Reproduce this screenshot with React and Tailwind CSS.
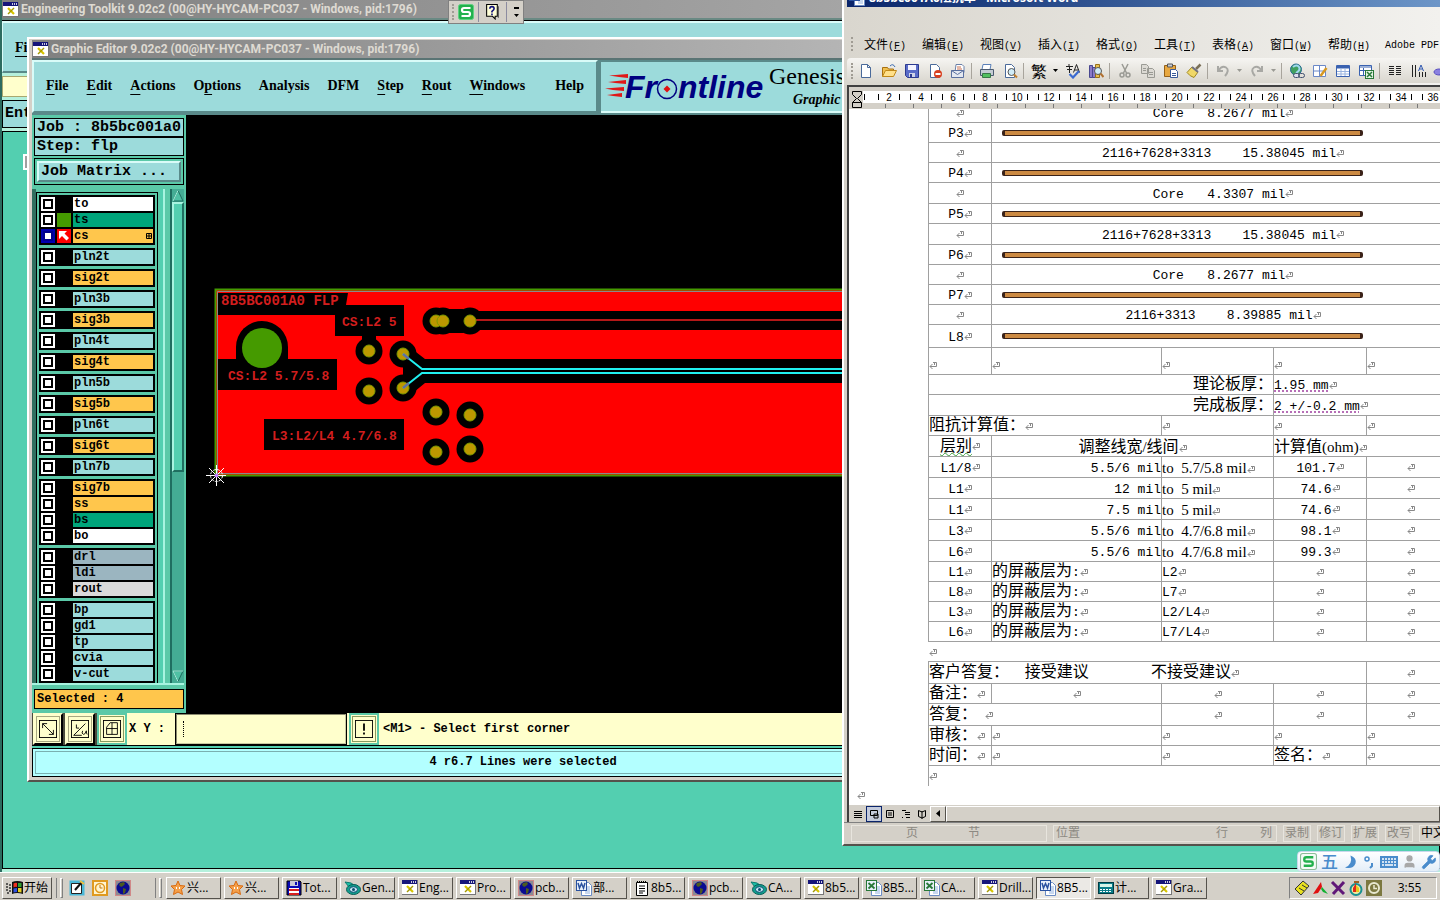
import React from 'react';
import clsx from 'clsx';
import { User, Wrench } from 'lucide-react';

const MONO = "font-['Liberation_Mono','Noto_Sans_CJK_SC',monospace]";
const SERIF = "font-['Liberation_Serif','Noto_Sans_CJK_SC',serif]";
const TITLE = "font-['Open_Sans','Noto_Sans_CJK_SC',sans-serif]";
const CAPTION = "font-['Roboto','Noto_Sans_CJK_SC',sans-serif]";

const RAISED = 'border border-t-white border-l-white border-r-[#55524c] border-b-[#55524c]';
const TEAL_RAISED = 'border-2 border-t-[#d9fbf8] border-l-[#d9fbf8] border-r-[#5a8a8a] border-b-[#5a8a8a] bg-[#9cdbdb]';

/* ---------- shared small icons ---------- */

const XIcon = () => (
    <svg width="16" height="15" viewBox="0 0 16 15" className="shrink-0">
        <rect width="16" height="15" fill="#777" />
        <rect width="15" height="14" fill="#fff" />
        <rect width="15" height="4" fill="#15157a" />
        <path d="M9 1h1v2H9zM11 1h1v2h-1zM13 1h1v2h-1z" fill="#ccd" />
        <path d="M5 6l6 6" stroke="#d6c400" strokeWidth="2.2" />
        <path d="M11 6l-6 6" stroke="#a39800" strokeWidth="1.4" />
    </svg>
);

const GlobeIcon = () => (
    <svg width="16" height="16" viewBox="0 0 16 16" className="shrink-0">
        <rect x="0.5" y="0.5" width="15" height="15" fill="#8b8a94" stroke="#d08888" />
        <circle cx="8" cy="8" r="6.5" fill="#0b0b90" />
        <path d="M5 3l4-1 1 2-2 2-2 1-2-2zM8 8l3 1-1 4-2 1z" fill="#4c5a20" />
    </svg>
);

const StarIcon = () => (
    <svg width="16" height="16" viewBox="0 0 16 16" className="shrink-0">
        <path d="M8 1l2 4.500 5 .5-3.500 3.500 1 5L8 12l-4.500 2.500 1-5L1 6l5-.5z" fill="#f5a04a" stroke="#d86a10" />
        <path d="M6 7h1v2H6zM9 7h1v2H9z" fill="#fff" />
    </svg>
);

const FloppyIcon = () => (
    <svg width="16" height="16" viewBox="0 0 16 16" className="shrink-0">
        <path d="M1 1h13l1 1v13H1z" fill="#0909b4" stroke="#000" />
        <path d="M4 1h8v5H4z" fill="#c8c8d8" />
        <path d="M9 2h2v3H9z" fill="#0909b4" />
        <path d="M3 8h10v7H3z" fill="#fff" />
        <path d="M3 9h10v2H3zM3 13h10v2H3z" fill="#d82020" />
    </svg>
);

const GenesisIcon = () => (
    <svg width="17" height="16" viewBox="0 0 17 16" className="shrink-0">
        <path d="M1 2l6 1 3 2-5 2z" fill="#1cc0a8" stroke="#0a7c70" />
        <ellipse cx="9.500" cy="9.500" rx="7" ry="5" fill="#12a08e" stroke="#0a5c58" />
        <ellipse cx="9.500" cy="9.500" rx="4" ry="2.800" fill="#bfe9f2" stroke="#104a70" />
        <circle cx="9.500" cy="9.500" r="1.500" fill="#104a70" />
    </svg>
);

const OfficeIcon = ({ tone, letter }) => (
    <svg width="16" height="16" viewBox="0 0 16 16" className="shrink-0">
        <path d="M5.500 2.500h7l3 3v10h-10z" fill="#fff" stroke="#6b8cc4" />
        <path d="M9 7h5M9 9h5M9 11h5M9 13h5" stroke="#8fb0e0" />
        <rect x="0.500" y="0.500" width="10" height="10" fill="#e8f0fa" stroke={tone} />
        {letter === 'W'
            ? <path d="M2 3l1.500 5L5.500 3.500 7.500 8 9 3" fill="none" stroke={tone} strokeWidth="1.500" />
            : <path d="M2.500 3l6 5.500M8.500 3l-6 5.500" stroke={tone} strokeWidth="1.800" />}
    </svg>
);

const NoteIcon = () => (
    <svg width="16" height="16" viewBox="0 0 16 16" className="shrink-0">
        <path d="M2.500 2.500h11v13h-11z" fill="#fff" stroke="#000" />
        <path d="M3 1.500h10" stroke="#000" strokeDasharray="1 1" />
        <path d="M5 6h6M5 8.500h6M5 11h6M5 13h4" stroke="#000" />
    </svg>
);

const CalcIcon = () => (
    <svg width="16" height="16" viewBox="0 0 16 16" className="shrink-0">
        <rect x="0.500" y="2.500" width="15" height="11" fill="#0a7c88" stroke="#003c44" />
        <path d="M2 4h12v3H2z" fill="#d8f4e8" />
        <path d="M2 9.500h12M2 11.500h12" stroke="#fff" strokeDasharray="2 1" />
    </svg>
);

const SogouIcon = ({ size, outlined }) => (
    <svg width={size} height={size} viewBox="0 0 16 16" className="shrink-0">
        <rect x="0.500" y="0.500" width="15" height="15" rx="2" fill={outlined ? '#f4fbf6' : '#23b14d'} stroke={outlined ? '#8cbc98' : '#5fd080'} />
        <path d="M12.500 4H6Q4 4 4 6t2 2h4q2 0 2 2t-2 2H3.500" fill="none" stroke={outlined ? '#23b14d' : '#fff'} strokeWidth="2.200" />
    </svg>
);

/* ---------- Engineering Toolkit (back window) ---------- */

const TitleBar = ({ children }) => (
    <div className={clsx('flex h-[18px] items-center gap-0.5 bg-linear-to-r from-[#808080] to-[#c0c0c0] pl-px text-[12px] font-bold whitespace-nowrap text-[#dedad2]', CAPTION)}>
        <XIcon />
        <span>{children}</span>
    </div>
);

const ToolkitWindow = () => (
    <section className="absolute inset-0 flex flex-col border-l-2 border-[#2d6b5f] bg-[#b5f0dc] pb-[3px]">
        <TitleBar>Engineering Toolkit 9.02c2 (00@HY-HYCAM-PC037 - Windows, pid:1796)</TitleBar>
        <div className="h-[3px] border-b border-black bg-[#6a8a84]" />
        <div className={clsx('flex h-[52px] items-center border-l border-black pl-3 text-[14px] font-bold', TEAL_RAISED, SERIF)}>
            <button type="button" className="underline underline-offset-4">File</button>
        </div>
        <div className="mt-[3px] h-[21px] border border-[#a8a870] bg-[#ffffcc]" />
        <div className={clsx('mt-[3px] h-[28px] border border-black bg-[#9cdbdb] pl-0.5 text-[15px] leading-[26px] font-bold', MONO)}>Entity</div>
        <div className="mt-[3px] flex-1 border border-black bg-[#53cfb0] pt-[22px] pl-[20px]">
            <div className="h-4 w-4 border-2 border-white bg-[#a0a0a0]" />
        </div>
    </section>
);

/* ---------- Graphic Editor ---------- */

const MENUS = [
    ['', 'F', 'ile'], ['', 'E', 'dit'], ['', 'A', 'ctions'], ['O', 'p', 'tions'],
    ['Analysis', '', ''], ['DFM', '', ''], ['', 'S', 'tep'], ['', 'R', 'out'], ['', 'W', 'indows'],
];

const WHITE = 'bg-white';
const GREEN = 'bg-[#00a57b]';
const ORANGE = 'bg-[#ffc64c]';
const CYAN = 'bg-[#9cdbdb]';
const SLATE = 'bg-[#9bb5c0]';

const LAYER_GROUPS = [
    [['to', WHITE], ['ts', GREEN, 'bg-[#459a00]'], ['cs', ORANGE, 'bg-[#ff0000]']],
    [['pln2t', CYAN]], [['sig2t', ORANGE]],
    [['pln3b', CYAN]], [['sig3b', ORANGE]],
    [['pln4t', CYAN]], [['sig4t', ORANGE]],
    [['pln5b', CYAN]], [['sig5b', ORANGE]],
    [['pln6t', CYAN]], [['sig6t', ORANGE]],
    [['pln7b', CYAN]],
    [['sig7b', ORANGE], ['ss', ORANGE], ['bs', GREEN], ['bo', WHITE]],
    [['drl', SLATE], ['ldi', SLATE], ['rout', 'bg-[#dadada]']],
    [['bp', CYAN], ['gd1', CYAN], ['tp', CYAN], ['cvia', CYAN], ['v-cut', CYAN], ['', CYAN]],
];

const LayerRow = ({ name, tone, swatch }) => {
    const active = name === 'cs';
    return (
        <label className="flex h-4 items-center gap-0.5 px-0.5">
            <span className={clsx('grid h-3.5 w-3.5 shrink-0 place-items-center', active ? 'bg-[#0000b0]' : 'bg-white')}>
                <input
                    type="checkbox"
                    defaultChecked={active}
                    aria-label={name || 'next layer'}
                    className={clsx('h-2.5 w-2.5 appearance-none border-2 bg-white', active ? 'border-[#00008c]' : 'border-black')}
                />
            </span>
            <span className={clsx('h-3.5 w-3.5 shrink-0', swatch)}>
                {active && (
                    <svg width="14" height="14" viewBox="0 0 14 14">
                        <path d="M2 2h8L7.500 4.500 12 9l-2.500 2.500L5 7 2 10z" fill="#fff" />
                    </svg>
                )}
            </span>
            <span className={clsx('flex h-3.5 flex-1 items-center justify-between px-px text-[12px] leading-[14px] font-bold', tone)}>
                {name}
                {active && (
                    <svg width="6" height="6" viewBox="0 0 6 6"><path d="M.5.5h5v5h-5zM3 .5v5M.5 3h5" fill="none" stroke="#000" /></svg>
                )}
            </span>
        </label>
    );
};

const ScrollTrough = () => (
    <div className="flex w-[14px] flex-col border-l-2 border-[#1f6e60] bg-[#44ac94]">
        <svg width="12" height="13" viewBox="0 0 12 13"><path d="M6 1.500L1 12h10z" fill="#4fc0a4" stroke="#1f6e60" /><path d="M6 1.500L1 12" stroke="#a8f4e0" /></svg>
        <div className="h-[270px] border-2 border-t-[#a8f4e0] border-r-[#1f6e60] border-b-[#1f6e60] border-l-[#a8f4e0] bg-[#53cfb0]" />
        <div className="flex-1" />
        <svg width="12" height="13" viewBox="0 0 12 13"><path d="M6 11.500L1 1h10z" fill="#4fc0a4" stroke="#1f6e60" /><path d="M1 1h10M1 1l5 10.500" stroke="#a8f4e0" /></svg>
    </div>
);

const Sidebar = () => (
    <aside className={clsx('flex w-[154px] shrink-0 flex-col bg-[#5bc9a8] px-0.5 pt-[3px] pb-1', MONO)}>
        <div className="h-[19px] border border-black bg-[#9cdbdb] pl-0.5 text-[15px] leading-[18px] font-bold whitespace-pre">Job : 8b5bc001a0</div>
        <div className="h-[19px] border border-black bg-[#9cdbdb] pl-0.5 text-[15px] leading-[18px] font-bold whitespace-pre">Step: flp</div>
        <div className="mt-0.5 h-[27px] border border-black p-0.5">
            <button type="button" className={clsx('block h-full w-full pl-0.5 text-left text-[15px] leading-[17px] font-bold', TEAL_RAISED)}>Job Matrix ...</button>
        </div>
        <div className="mt-1 -ml-0.5 flex min-h-0 flex-1 overflow-hidden border-b-2 border-[#a8f4e0]">
            <div className="w-1 bg-[#2f7060]" />
            <div className="mt-[3px] flex w-[122px] flex-col gap-[3px] border border-b-0 border-black p-0.5 pb-0">
                {LAYER_GROUPS.map((group) => (
                    <div key={group[0][0]} className="shrink-0 bg-black py-px">
                        {group.map(([name, tone, swatch]) => <LayerRow key={name} name={name} tone={tone} swatch={swatch} />)}
                    </div>
                ))}
            </div>
            <div className="ml-0.5 w-[3px] bg-[#53cfb0]" />
            <div className="w-0.5 bg-[#a8f4e0]" />
            <div className="flex-1" />
            <ScrollTrough />
        </div>
        <div className="mt-1 h-[20px] border border-black bg-[#ffc64c] pl-0.5 text-[12px] leading-[18px] font-bold whitespace-pre">Selected : 4</div>
    </aside>
);

const FrontlineLogo = () => (
    <svg width="164" height="34" viewBox="0 0 164 34" className="shrink-0">
        <path d="M4 5.500L23 4v4L14 7zM3 12l18-2v4L10 13zM0 18.500L19 17v4L8 20zM2 25l15-2v4L8 26z" fill="#e01818" />
        <g fontFamily="Liberation Sans" fontWeight="700" fontStyle="italic" fontSize="32" fill="#000080">
            <text x="20" y="28">Fr</text>
            <text x="73" y="28">ntline</text>
        </g>
        <circle cx="62" cy="19" r="9.500" fill="none" stroke="#000080" strokeWidth="1.500" />
        <path d="M62 15.500l3.500 3.500-3.500 3.500-3.500-3.500z" fill="#e01010" />
    </svg>
);

const MenuBar = () => (
    <header className={clsx('flex h-[55px] bg-[#5a8a8a] pb-0.5', SERIF)}>
        <nav className={clsx('flex w-[566px] shrink-0 items-center gap-[18px] px-3 pb-0.5 text-[14px] font-bold', TEAL_RAISED)}>
            {MENUS.map(([a, u, b]) => (
                <button key={a + u + b} type="button">{a}<span className="underline underline-offset-4">{u}</span>{b}</button>
            ))}
            <button type="button" className="ml-auto">Help</button>
        </nav>
        <div className="ml-[3px] flex flex-1 items-center border-t-2 border-b-2 border-t-[#5a8a8a] border-b-[#d9fbf8] bg-[#9cdbdb] pl-1">
            <FrontlineLogo />
            <div className="flex flex-col">
                <span className="text-[24px] leading-[26px]">Genesis 2000</span>
                <span className="pl-6 text-[14px] leading-[22px] font-bold italic">Graphic Editor</span>
            </div>
        </div>
    </header>
);

const PADS = [[436, 321], [443, 321], [470, 321], [369, 351], [403, 354], [369, 391], [403, 388], [436, 412], [470, 415], [436, 452], [470, 449]];

const BoardCanvas = () => (
    <svg width="830" height="598" viewBox="186 115 830 598" className="shrink-0">
        <rect x="215.500" y="289.500" width="900" height="186" fill="#f00" stroke="#459a00" strokeWidth="2" />
        <path d="M217.500 475V291.500H1100M217.500 473.500H1100" fill="none" stroke="#8a8a8a" />
        <path d="M218 293h130l-2 12h-11v10H218zM335 305h69v31h-69zM218 359h119v31H218zM264 419h140v31H264z" fill="#000" />
        <path d="M470 311h560v19H470zM443 309h20l7 4v17l-7 3h-20zM403 342l22 17h600v24H425l-22 18z" fill="#000" />
        <circle cx="262" cy="347" r="26" fill="#000" />
        <path d="M236 347h52v14h-52zM362 336h14v6h-14z" fill="#000" />
        {PADS.map(([x, y]) => <circle key={`h${x}-${y}`} cx={x} cy={y} r="13.500" fill="#000" />)}
        <path d="M470 320h560" stroke="#b41818" strokeWidth="2" />
        {PADS.map(([x, y]) => <circle key={`p${x}-${y}`} cx={x} cy={y} r="6" fill="#bc9800" stroke="#7c9a00" />)}
        <circle cx="262" cy="348" r="20" fill="#459a00" />
        <path d="M403 354l19 15h600M403 388l19-15h600" fill="none" stroke="#20f0f0" strokeWidth="2" />
        <path d="M403 354l6 5M403 388l6-5" stroke="#6070a0" strokeWidth="2.500" />
        <g fill="#d21e1e" fontFamily="Liberation Mono" fontWeight="700" fontSize="13">
            <text x="221" y="305" fontSize="14">8B5BC001A0 FLP</text>
            <text x="342" y="326">CS:L2 5</text>
            <text x="228" y="380">CS:L2 5.7/5.8</text>
            <text x="272" y="440">L3:L2/L4 4.7/6.8</text>
        </g>
        <g fill="none" stroke="#fff">
            <path d="M206 475.500h20M216.500 465v21M209 468l15 15M224 468l-15 15" />
            <circle cx="216.500" cy="475.500" r="6" strokeDasharray="3 1" />
        </g>
        <circle cx="216.500" cy="475.500" r="2" fill="#c080ff" />
    </svg>
);

const ToolButton = ({ label, framed, children }) => (
    <button
        type="button"
        aria-label={label}
        className={clsx('grid w-[30px] place-items-center border-2', framed ? 'border-[#5bc9a8] bg-[#ffffcc] outline outline-[#8a9a60] -outline-offset-4' : 'border-[#ffffcc] border-r-black border-b-black bg-[#ffffcc] outline outline-[#a8a880] -outline-offset-4')}
    >
        <svg width="18" height="18" viewBox="0 0 20 20" fill="none" stroke="#000">
            <rect x="0.500" y="0.500" width="19" height="19" />
            {children}
        </svg>
    </button>
);

const CommandBar = () => (
    <div className={clsx('flex h-[33px] border-b border-black bg-[#ffffcc] text-[12px] font-bold', MONO)}>
        <div className="flex gap-0.5 bg-black/70 pl-px">
            <ToolButton label="Corner to corner"><path d="M4 4l12 12M4 9V4h5M16 11v5h-5" /></ToolButton>
            <ToolButton label="Length and angle"><path d="M3 17L16 4M3 17h9M6 5v4h3M13 12q-2 3 1 4 2 0 3-4 0 3 1 4" /></ToolButton>
            <ToolButton label="Grid" framed><path d="M4 16V8l4-5h8v13zM10 3v13M4 9.500h12" /></ToolButton>
        </div>
        <label htmlFor="xy" className="w-[48px] self-center pl-0.5 whitespace-pre">X Y :</label>
        <div className="flex w-[172px] items-center border-2 border-t-[#8a8a70] border-r-[#c8c8a0] border-b-[#c8c8a0] border-l-[#8a8a70] pl-1.5 outline outline-black -outline-offset-1">
            <span className="h-4 border-l border-dotted border-black" />
            <input id="xy" type="text" className="w-full bg-transparent outline-none" />
        </div>
        <div className="ml-0.5 flex bg-[#5bc9a8]">
            <ToolButton label="Warnings" framed><path d="M10 4v8M10 14v2" strokeWidth="2" /></ToolButton>
        </div>
        <div className="ml-0.5 self-center pl-0.5 whitespace-pre">&lt;M1&gt; - Select first corner</div>
    </div>
);

const GraphicEditor = () => (
    <section className="absolute top-[37px] left-[27px] w-[992px] border-2 border-white border-r-[#55524c] border-b-[#55524c]">
        <div className="border-[3px] border-t-[1px] border-[#d4d0c8]">
            <TitleBar>Graphic Editor 9.02c2 (00@HY-HYCAM-PC037 - Windows, pid:1796)</TitleBar>
            <div className="h-0.5 bg-[#5a7474]" />
            <MenuBar />
            <div className="flex h-[598px] overflow-hidden bg-black">
                <Sidebar />
                <BoardCanvas />
            </div>
            <CommandBar />
            <div className={clsx('mt-0.5 h-[29px] border border-black bg-[#b3ffff] text-center text-[12px] leading-[26px] font-bold outline-1 -outline-offset-4 outline-[#7ab0b0]', MONO)}>
                4 r6.7 Lines were selected
            </div>
        </div>
    </section>
);

/* ---------- Word ---------- */

const WORD_MENUS = [['文件', 'F'], ['编辑', 'E'], ['视图', 'V'], ['插入', 'I'], ['格式', 'O'], ['工具', 'T'], ['表格', 'A'], ['窗口', 'W'], ['帮助', 'H']];

const PAGE = 'M3.500 1.500h6l3 3v10h-9z';

const TOOLBAR = [
    ['New', <><path d={PAGE} fill="#fff" stroke="#4a6a9a" /><path d="M9.500 1.500v3h3" fill="none" stroke="#4a6a9a" /></>],
    ['Open', <><path d="M1.500 13.500V4.500h5l1 1.500h5v2" fill="#f0c050" stroke="#a87010" /><path d="M1.500 13.500l3-6h11l-3 6z" fill="#ffe08a" stroke="#c08818" /><path d="M9 3q3-3 5 1" fill="none" stroke="#3a6ab0" /></>],
    ['Save', <><path d="M1.500 1.500h13v13h-11l-2-2z" fill="#5a6cc8" stroke="#2c3a90" /><path d="M4 2h8v5H4z" fill="#f4f4ff" /><path d="M5 10h6v4H5z" fill="#d0d4e8" /><path d="M6 11h2v3H6z" fill="#2c3a90" /></>],
    ['Permission', <><path d={PAGE} fill="#fff" stroke="#4a6a9a" /><circle cx="11" cy="11" r="4" fill="#d84020" /><path d="M8.500 11h5" stroke="#fff" strokeWidth="2" /></>],
    ['Mail', <><path d="M6 1.500h6l2 2v6H5z" fill="#fff" stroke="#6a80a8" /><path d="M7 4h4M7 6h5" stroke="#c87050" /><path d="M1.500 7.500h12v7h-12z" fill="#e4e8f0" stroke="#5a70a0" /><path d="M1.500 7.500l6 4 6-4" fill="none" stroke="#5a70a0" /></>],
    null,
    ['Print', <><path d="M4 1.500h8l-1 5H3z" fill="#fff" stroke="#5a80b8" /><path d="M1.500 6.500h13v6h-13z" fill="#c4ccd4" stroke="#4a5a70" /><path d="M3.500 10.500h8v4h-8z" fill="#52c060" stroke="#387848" /></>],
    ['Preview', <><path d={PAGE} fill="#fff" stroke="#4a6a9a" /><circle cx="9.500" cy="9" r="3.500" fill="#d0ecf8" stroke="#555" /><path d="M12 11.500l3 3" stroke="#c08030" strokeWidth="2" /></>],
    null,
    ['Convert', '繁'],
    'more',
    ['Spelling', <><path d="M1 3.500h7M4 1v2M2 6.500h5M4.500 4v6M8.500 9.500l3-8 3 8M9.500 7h4" fill="none" stroke="#222" /><path d="M4.500 11l3.500 3.500 6-6.500" fill="none" stroke="#3a6ad0" strokeWidth="2.200" /></>],
    ['Research', <><path d="M1.500 2.500h3v12h-3zM4.500 4.500h3v10h-3z" fill="#8a7ac8" stroke="#4a4890" /><path d="M7.500 1.500h4v13h-4z" fill="#e8c050" stroke="#987018" /><circle cx="10" cy="8" r="3.500" fill="#d0ecf8" stroke="#555" /><path d="M12.500 10.500l3 3.500" stroke="#b07030" strokeWidth="2" /></>],
    null,
    ['Cut', <><path d="M5 1l4.500 9M11 1L6.500 10" stroke="#9a9a94" strokeWidth="1.500" /><circle cx="5" cy="12" r="2" fill="none" stroke="#9a9a94" strokeWidth="1.500" /><circle cx="11" cy="12" r="2" fill="none" stroke="#9a9a94" strokeWidth="1.500" /></>],
    ['Copy', <><path d="M1.500 1.500h5l2 2v7h-7zM7.500 5.500h5l2 2v7h-7z" fill="#dcdad4" stroke="#9a9a94" /><path d="M9 9.500h4M9 11.500h4M3 5.500h3M3 7.500h3" stroke="#9a9a94" /></>],
    ['Paste', <><path d="M1.500 2.500h11v11h-11z" fill="#e8a840" stroke="#946018" /><path d="M4.500 1h5v3h-5z" fill="#c8ccd4" stroke="#555" /><path d="M7.500 6.500h5l2 2v6h-7z" fill="#fff" stroke="#3a5a98" /><path d="M9 10.500h4M9 12.500h4" stroke="#3a5a98" /></>],
    ['Format painter', <><path d="M14.500 1.500L10 6" stroke="#7a7058" strokeWidth="2.500" /><path d="M6 4l6 5-4 5.500q-4-1-7-5z" fill="#f0d868" stroke="#a08820" /><path d="M6 4l6 5" stroke="#707080" strokeWidth="2" /></>],
    null,
    ['Undo', <path d="M3 3v5h5M3.500 7.500Q7 2 11 4.500t-1 8.500" fill="none" stroke="#a8a8a4" strokeWidth="2" />],
    'more-dim',
    ['Redo', <path d="M13 3v5H8M12.500 7.500Q9 2 5 4.500t1 8.500" fill="none" stroke="#a8a8a4" strokeWidth="2" />],
    'more-dim',
    null,
    ['Hyperlink', <><circle cx="7" cy="6.500" r="5.500" fill="#40a060" stroke="#2a6a98" /><path d="M4 4q4-3 6 0t-3 6" fill="none" stroke="#a0d8f0" strokeWidth="2" /><rect x="4.500" y="10.500" width="6" height="4" rx="2" fill="#dde" stroke="#405070" /><rect x="9.500" y="10.500" width="6" height="4" rx="2" fill="none" stroke="#405070" /></>],
    ['Tables and borders', <><path d="M1.500 2.500h12v11h-12zM7.500 2.500v11M1.500 8h12" fill="#fff" stroke="#6a88c8" /><path d="M14.500 5l-6 8" stroke="#d89820" strokeWidth="2.500" /></>],
    ['Insert table', <><path d="M1.500 2.500h13v11h-13z" fill="#fff" stroke="#3a62b0" /><path d="M2 4h12" stroke="#3a62b0" strokeWidth="3" /><path d="M2 8.500h12M2 11h12M6 5v8M10 5v8" stroke="#9ab4e0" /></>],
    ['Insert sheet', <><path d="M1.500 2.500h12v10h-12z" fill="#fff" stroke="#3a62b0" /><path d="M2 4h11M2 7.500h11M5.500 5v8" stroke="#3a62b0" /><rect x="7.500" y="7.500" width="8" height="8" fill="#e4f4e4" stroke="#287838" /><path d="M9 9l5 5M14 9l-5 5" stroke="#287838" strokeWidth="1.500" /></>],
    null,
    ['Columns', <path d="M2 3.500h5M2 5.500h5M2 7.500h5M2 9.500h5M2 11.500h5M9 3.500h5M9 5.500h5M9 7.500h5M9 9.500h5M9 11.500h5" stroke="#222" />],
    ['Text direction', <><path d="M2.500 2v12M5.500 2v12M9.500 9v5M12.500 9v5M15.500 9v5" stroke="#222" /><path d="M8.500 8l2.500-6 2.500 6M9.500 6h3" fill="none" stroke="#3058b0" /></>],
    ['Drawing', <><ellipse cx="6" cy="9" rx="5" ry="3" fill="#8a80e0" stroke="#5a50c0" /><path d="M7 12l4-9 4 9z" fill="#6a8ae0" stroke="#3058b0" /></>],
];

const WordToolbar = () => (
    <div className="flex h-[25px] w-max items-center rounded-l-sm bg-linear-to-b from-[#f6f5f2] to-[#d9d6ce]">
        <span className="ml-1 h-4 w-[3px] border-l-2 border-dotted border-[#a09c94]" />
        {TOOLBAR.map((item, i) => {
            if (!item) return <span key={i} className="ml-0.5 h-4 w-1 border-l border-[#a8a49c]" />;
            if (typeof item === 'string') {
                return (
                    <button key={i} type="button" aria-label="More" className={clsx('grid w-[11px] place-items-center', item === 'more-dim' ? 'text-[#9a9a94]' : 'text-black')}>
                        <svg width="5" height="3" viewBox="0 0 5 3"><path d="M0 0h5L2.500 3z" fill="currentColor" /></svg>
                    </button>
                );
            }
            return (
                <button key={i} type="button" aria-label={item[0]} className="grid h-[22px] w-[23px] shrink-0 place-items-center text-[16px] leading-4">
                    {typeof item[1] === 'string' ? item[1] : <svg width="16" height="16" viewBox="0 0 16 16">{item[1]}</svg>}
                </button>
            );
        })}
    </div>
);

const Ruler = () => (
    <div className="relative h-[24px] overflow-hidden border-t-2 border-[#404040] bg-[#d4d0c8] pt-1">
        <div className="ml-[14px] flex h-[12px] bg-white text-[10px] leading-[13px]">
            <span className="my-[3px] mr-2 ml-px border-l border-black" />
            {Array.from({ length: 18 }, (_, i) => (i + 1) * 2).map((n) => (
                <span key={n} className="flex w-8 shrink-0 items-center justify-between px-[5px]">
                    <i className="h-1.5 border-l border-black" />{n}<i className="h-1.5 border-l border-black" />
                </span>
            ))}
        </div>
        <div className="ml-[36px] flex pt-px">
            {Array.from({ length: 24 }, (_, i) => <i key={i} className="h-1 w-7 shrink-0 border-l border-[#777]" />)}
        </div>
        <svg width="12" height="20" viewBox="0 0 12 20" className="absolute top-0.5 left-0.5">
            <path d="M1.500 2.500h9v3l-4 4 4 4v5h-9v-5l4-4-4-4zM1.500 13.500h9" fill="#d4d0c8" stroke="#000" />
        </svg>
    </div>
);

const Mark = () => (
    <svg width="8" height="8" viewBox="0 0 8 8" className="inline-block shrink-0">
        <path d="M4 1.500h3.500v4H1M3.500 3L1 5.500 3.500 8M5.500 1.500v2.500" fill="none" stroke="#888" />
    </svg>
);

const Copper = () => <div className="ml-[10px] h-1.5 w-[361px] rounded-xs border border-x-[3px] border-[#3a2218] bg-[#cc8a42]" />;

const c = (text, opts = {}) => ({ text, ...opts });
const L = 'text-left';
const R = 'text-right';
const SHORT = 'h-5';
const TALL = 'h-[21px]';

const stack = (name, text, h1, h2) => [
    { h: h1, cells: [c(''), c(text, { span: 4 })] },
    { h: h2, cells: [c(name), c('', { span: 4, copper: true })] },
];
const calc = (layer, from, to, ohm) => ({
    h: TALL,
    cells: [c(layer), c(from, { align: R, bare: true }), c(to, { align: L, serif: true }), c(ohm), c('')],
});
const shield = (layer, ref) => ({ h: SHORT, cells: [c(layer), c('的屏蔽层为:', { align: L }), c(ref, { align: L }), c(''), c('')] });

const ROWS = [
    ...stack('P3', 'Core   8.2677 mil', SHORT, SHORT),
    ...stack('P4', '2116+7628+3313    15.38045 mil', SHORT, SHORT),
    ...stack('P5', 'Core   4.3307 mil', TALL, SHORT),
    ...stack('P6', '2116+7628+3313    15.38045 mil', TALL, SHORT),
    ...stack('P7', 'Core   8.2677 mil', SHORT, SHORT),
    ...stack('L8', '2116+3313    8.39885 mil', SHORT, 'h-[23px]'),
    { h: 'h-[27px]', low: true, cells: [c('', { align: L }), c('', { align: L }), c('', { align: L }), c('', { align: L }), c('', { align: L })] },
    { h: SHORT, cells: [c('理论板厚：', { span: 3, align: R, bare: true }), c('1.95 mm', { span: 2, align: L, smart: true })] },
    { h: TALL, cells: [c('完成板厚：', { span: 3, align: R, bare: true }), c('2 +/-0.2 mm', { span: 2, align: L, smart: true })] },
    { h: SHORT, cells: [c('阻抗计算值：', { span: 2, align: L }), c('', { align: L }), c('', { align: L }), c('', { align: L })] },
    { h: TALL, cells: [c('层别', { wavy: true }), c('调整线宽/线间', { span: 2, serif: true }), c('计算值(ohm)', { span: 2, align: L, serif: true })] },
    calc('L1/8', '5.5/6 mil', 'to  5.7/5.8 mil', '101.7'),
    calc('L1', '12 mil', 'to  5 mil', '74.6'),
    calc('L1', '7.5 mil', 'to  5 mil', '74.6'),
    calc('L3', '5.5/6 mil', 'to  4.7/6.8 mil', '98.1'),
    calc('L6', '5.5/6 mil', 'to  4.7/6.8 mil', '99.3'),
    shield('L1', 'L2'),
    shield('L8', 'L7'),
    shield('L3', 'L2/L4'),
    shield('L6', 'L7/L4'),
    { h: SHORT, open: true, cells: [c('', { span: 5, align: L })] },
    { h: 'h-[22px]', cells: [c('客户答复：  接受建议        不接受建议', { span: 4, align: L }), c('')] },
    { h: SHORT, cells: [c('备注：', { align: L }), c(''), c(''), c(''), c('')] },
    { h: 'h-[22px]', cells: [c('答复： ', { span: 2, align: L }), c(''), c(''), c('')] },
    { h: SHORT, cells: [c('审核：', { align: L }), c('', { align: L }), c('', { align: L }), c('', { align: L }), c('', { align: L })] },
    { h: SHORT, cells: [c('时间：', { align: L }), c('', { align: L }), c('', { align: L }), c('签名：', { align: L }), c('', { align: L })] },
    { h: SHORT, last: true, cells: [c('', { span: 5, align: L })] },
];

// SimSun-like mix: half-width glyphs at 13px, ideographs at 16px
const CellText = ({ text, serif }) => text.split(/([\u4e00-\u9fff\uff1a]+)/).map((part, i) => (
    i % 2 ? <span key={i} className="text-[16px]">{part}</span> : <span key={i} className={serif ? 'text-[15px]' : 'text-[13px]'}>{part}</span>
));

const Cell = ({ cell, row }) => (
    <td
        colSpan={cell.span || 1}
        className={clsx(
            'border-[#a0a0a0] px-0 pb-0 leading-4 whitespace-pre',
            cell.copper ? 'pt-0' : 'pt-0.5',
            row.open ? 'border-y' : row.last ? 'border-t border-l' : 'border',
            row.low ? 'align-bottom' : 'align-middle',
            cell.align || 'text-center',
            cell.serif ? SERIF : MONO,
        )}
    >
        {cell.copper ? <Copper /> : (
            <>
                <span
                    className={clsx(
                        cell.smart && 'underline decoration-[#a040a0] decoration-dotted underline-offset-2',
                        cell.wavy && 'underline decoration-[#40a040] decoration-wavy decoration-1',
                    )}
                >
                    <CellText text={cell.text} serif={cell.serif} />
                </span>
                {!cell.bare && <Mark />}
            </>
        )}
    </td>
);

const Document = () => (
    <div className="h-[696px] overflow-hidden bg-white">
        <table className="-mt-[7px] ml-[79px] w-[526px] table-fixed border-collapse">
            <colgroup>
                <col className="w-[63px]" />
                <col className="w-[170px]" />
                <col className="w-[112px]" />
                <col className="w-[93px]" />
                <col className="w-[88px]" />
            </colgroup>
            <tbody>
                {ROWS.map((row, i) => (
                    <tr key={i} className={row.h}>
                        {row.cells.map((cell, j) => <Cell key={j} cell={cell} row={row} />)}
                    </tr>
                ))}
            </tbody>
        </table>
        <div className="pl-2 leading-4"><Mark /></div>
    </div>
);

const VIEWS = [
    ['Normal', 'M1 2.500h8M1 4.500h8M1 6.500h8M1 8.500h8'],
    ['Web', 'M1.500 1.500h7v5h-7zM5 5h4v4H5z'],
    ['Print layout', 'M1.500 1.500h7v7h-7zM3 4h4M3 6h4'],
    ['Outline', 'M1 1.500h4M4 3.500h5M4 5.500h5M1 8.500h1M5 8.500h4'],
    ['Reading', 'M5 2v8M1.500 1.500L5 3l3.500-1.500v6L5 9 1.500 7.500z'],
];

const FIELD = 'h-[17px] border border-[#e8e5de]';

const WordWindow = () => (
    <section className="absolute top-[-11px] right-0 left-[842px] overflow-hidden border-b-2 border-l-2 border-b-[#55524c] border-l-white bg-[#d4d0c8]">
        <div className={clsx('ml-[3px] flex h-[18px] items-center gap-1 bg-linear-to-r from-[#0a246a] to-[#6d96c8] pl-0.5 text-[12px] font-bold whitespace-nowrap text-white', TITLE)}>
            <OfficeIcon tone="#2a52a0" letter="W" />
            8b5bc001A0阻抗单 - Microsoft Word
        </div>
        <div className="bg-linear-to-r from-[#d9d6ce] to-[#f2f1ee] pb-0.5 pl-[3px]">
            <nav className={clsx('flex h-[51px] items-end overflow-hidden pb-[3px] pl-1 text-[12px] whitespace-nowrap', MONO)}>
                <span className="mb-1 h-3.5 w-3 shrink-0 border-l-2 border-dotted border-[#a09c94]" />
                {WORD_MENUS.map(([label, key]) => (
                    <button key={key} type="button" className="w-[58px] shrink-0 pl-px text-left">
                        {label}<span className="text-[10px]">(<u>{key}</u>)</span>
                    </button>
                ))}
                <button type="button" className="pb-0.5 text-[10px]">Adobe PDF</button>
            </nav>
            <WordToolbar />
        </div>
        <div className="ml-[3px] border-l-2 border-[#404040]">
            <div className="font-['Liberation_Sans',sans-serif]"><Ruler /></div>
            <Document />
            <div className="flex h-[17px] items-center bg-[#d4d0c8] pl-px">
                {VIEWS.map(([name, d]) => (
                    <button key={name} type="button" aria-label={name} className={clsx('grid h-4 w-4 place-items-center', name === 'Web' && 'border border-[#0a246a] bg-[#c4cbdc]')}>
                        <svg width="10" height="10" viewBox="0 0 10 10"><path d={d} fill="none" stroke="#000" /></svg>
                    </button>
                ))}
                <button type="button" aria-label="Scroll left" className={clsx('grid h-4 w-4 place-items-center', RAISED)}>
                    <svg width="4" height="7" viewBox="0 0 4 7"><path d="M4 0v7L0 3.500z" /></svg>
                </button>
                <div className={clsx('h-4 flex-1', RAISED)} />
            </div>
        </div>
        <footer className={clsx('flex h-[22px] gap-1.5 overflow-hidden border-t border-[#808080] pt-0.5 pl-[7px] text-[12px] leading-[14px] whitespace-nowrap text-[#8c8982]', TITLE)}>
            <span className={clsx(FIELD, 'w-[196px] shrink-0 pl-[54px]')}>页<span className="ml-[50px]">节</span></span>
            <span className={clsx(FIELD, 'flex w-[224px] shrink-0 pl-0.5')}>位置<span className="ml-[136px]">行</span><span className="ml-8">列</span></span>
            {['录制', '修订', '扩展', '改写'].map((t) => <span key={t} className={clsx(FIELD, 'w-7 shrink-0 px-px')}>{t}</span>)}
            <span className={clsx(FIELD, 'shrink-0 pl-px text-black')}>中文(中国)</span>
        </footer>
    </section>
);

/* ---------- floating input bars and taskbar ---------- */

const LanguageBar = () => (
    <div className="absolute top-0 left-[448px] flex h-6 items-center border border-[#808080] bg-[#d4d0c8] px-[3px]">
        <span className="h-4 border-l-2 border-dotted border-[#a09c94]" />
        <span className="px-1"><SogouIcon size={16} /></span>
        <span className="h-5 border-l border-[#8c8ca0]" />
        <span className="px-1.5">
            <svg width="15" height="16" viewBox="0 0 14 15">
                <path d="M1.500.5h10v11h-2v2.500l-2.500-2.500H1.500z" fill="#ffffd8" stroke="#000" />
                <path d="M12.500 2v11" stroke="#555" />
                <path d="M4.500 4.500q0-2 2-2t2 2q0 1-2 2.500v1M6.500 9v1.500" fill="none" stroke="#10107a" strokeWidth="1.500" />
            </svg>
        </span>
        <span className="mr-1.5 h-5 border-l border-[#8c8ca0]" />
        <svg width="7" height="12" viewBox="0 0 7 12"><path d="M1 1h5v2H1zM1 8h5L3.500 11z" /></svg>
    </div>
);

const SogouBar = () => (
    <div className="absolute right-0 bottom-0 flex h-[21px] items-center gap-1 rounded-sm border border-[#c8d8ec] bg-linear-to-b from-white to-[#e4eef8] px-0.5 text-[#4a8ccc]">
        <SogouIcon size={17} outlined />
        <span className={clsx('text-[17px] leading-4 font-medium', TITLE)}>五</span>
        <svg width="16" height="16" viewBox="0 0 16 16"><path d="M8.500 1.500Q15 4 13.500 9.500 11 15.500 3 13.500 11 10.500 8.500 1.500z" fill="currentColor" /></svg>
        <svg width="14" height="14" viewBox="0 0 14 14"><circle cx="5" cy="4" r="2" fill="none" stroke="currentColor" strokeWidth="1.500" /><path d="M10 8v3l-2 2" fill="none" stroke="currentColor" strokeWidth="2" /></svg>
        <svg width="18" height="14" viewBox="0 0 18 14"><path d="M0 1h18v12H0z" fill="currentColor" /><path d="M2 4h14M2 7h14" stroke="#fff" strokeWidth="1.500" strokeDasharray="2 1" /><path d="M2 10h2M5 10h8M14 10h2" stroke="#fff" strokeWidth="1.500" /></svg>
        <User size={15} fill="#a8a8a8" stroke="#a8a8a8" />
        <Wrench size={16} fill="currentColor" strokeWidth={1} />
    </div>
);

const TASKS = [
    [StarIcon, '兴...'], [StarIcon, '兴...'], [FloppyIcon, 'Tot...'], [GenesisIcon, 'Gen...'], [XIcon, 'Eng...'], [XIcon, 'Pro...'],
    [GlobeIcon, 'pcb...'], [OfficeIcon, '部...', 'W'], [NoteIcon, '8b5...'], [GlobeIcon, 'pcb...'], [GenesisIcon, 'CA...'], [XIcon, '8b5...'],
    [OfficeIcon, '8B5...', 'X'], [OfficeIcon, 'CA...', 'X'], [XIcon, 'Drill...'], [OfficeIcon, '8B5...', 'W', true], [CalcIcon, '计...'], [XIcon, 'Gra...'],
];

const Grip = () => <span className="flex h-5 gap-[3px]"><i className="border-l border-[#808080]" /><i className="w-[3px] border border-t-white border-r-[#808080] border-b-[#808080] border-l-white" /></span>;

const Taskbar = () => (
    <footer className={clsx('flex h-[28px] shrink-0 items-center border-t border-white bg-[#d4d0c8] pt-0.5 pr-[3px] pl-0.5 text-[12px] leading-4', TITLE)}>
        <button type="button" className={clsx('mr-1 flex h-[22px] w-[50px] items-center pl-[3px] whitespace-nowrap', RAISED)}>
            <svg width="18" height="16" viewBox="0 0 18 16" className="shrink-0">
                <path d="M6 2q5-2 11 0v12q-6-2-11 0z" fill="#111" />
                <path d="M7.500 3.500q2-1 3.500-.5v4q-1.500-.5-3.500.5z" fill="#f03020" />
                <path d="M12 3h3.500v4H12z" fill="#30a030" />
                <path d="M7.500 8.500Q9 8 11 8v4q-2 0-3.500.5z" fill="#3050e0" />
                <path d="M12 8h3.500v4.500L12 12z" fill="#e8d020" />
                <path d="M0 4h2M3 5h2M0 7h2M3 8h2M0 10h2M3 11h2M1 13h2" stroke="#333" strokeWidth="1.500" />
            </svg>
            开始
        </button>
        <Grip />
        <div className="ml-1.5 flex w-[86px] items-center gap-[7px]">
            <svg width="16" height="16" viewBox="0 0 16 16"><rect x="0.500" y="0.500" width="15" height="15" fill="#4ab8d8" /><path d="M2.500 3.500h10v10h-10z" fill="#fff" stroke="#222" /><path d="M6 10l7-8" stroke="#111" strokeWidth="2" /><path d="M11 1l4 3" stroke="#f0c040" strokeWidth="2" /></svg>
            <svg width="16" height="16" viewBox="0 0 16 16"><rect x="1" y="1" width="14" height="14" fill="#fff4d0" stroke="#e09a20" strokeWidth="2" /><circle cx="8" cy="8" r="4.500" fill="none" stroke="#e09a20" strokeWidth="1.500" /><path d="M8 5v3h2.500" fill="none" stroke="#c07810" /></svg>
            <GlobeIcon />
        </div>
        <Grip />
        <div className="ml-1 flex min-w-0 flex-1 gap-[3px]">
            {TASKS.map(([Icon, label, letter, on], i) => (
                <button
                    key={i}
                    type="button"
                    className={clsx(
                        'flex h-[22px] w-[55px] items-center gap-px overflow-hidden pl-[3px] whitespace-nowrap',
                        on ? 'border border-t-[#55524c] border-r-white border-b-white border-l-[#55524c] bg-[#ebe9e5]' : RAISED,
                    )}
                >
                    <Icon tone={letter === 'X' ? '#287838' : '#2a52a0'} letter={letter} />
                    {label}
                </button>
            ))}
        </div>
        <div className="flex h-[22px] w-[148px] items-center gap-px border border-t-[#808080] border-r-white border-b-white border-l-[#808080] pl-1">
            <svg width="17" height="16" viewBox="0 0 17 16"><path d="M1 9l8-8 6 5-8 9z" fill="#e8e020" stroke="#333" /><path d="M5 8l5 3M8 5l5 3" stroke="#333" /></svg>
            <svg width="17" height="16" viewBox="0 0 17 16"><path d="M9 2L1 14l5-1 4-6z" fill="#e01010" /><path d="M10 7l6 7-5-2-2-3z" fill="#10b030" /></svg>
            <svg width="17" height="16" viewBox="0 0 17 16"><path d="M2 2l12 12M14 2L3 14" stroke="#601878" strokeWidth="3" /></svg>
            <svg width="17" height="16" viewBox="0 0 17 16"><circle cx="8" cy="9.500" r="5.500" fill="#f0e8a0" stroke="#189090" strokeWidth="2" /><path d="M8 3v9H5V8z" fill="#e02818" /><path d="M8 5l3 3v4H8z" fill="#e8c818" /><path d="M6 2h5" stroke="#a06020" strokeWidth="2" /></svg>
            <svg width="16" height="16" viewBox="0 0 16 16"><rect width="16" height="16" fill="#7c7840" /><circle cx="8" cy="8" r="5" fill="none" stroke="#e8e8d0" strokeWidth="2" /><path d="M8 5v3.500h3" fill="none" stroke="#e8e8d0" strokeWidth="1.500" /></svg>
            <span className="mx-auto">3:55</span>
        </div>
    </footer>
);

export default function App() {
    return (
        <div className="flex h-screen flex-col overflow-hidden bg-[#53cfb0] text-black">
            <main className="relative min-h-0 flex-1 overflow-hidden">
                <ToolkitWindow />
                <LanguageBar />
                <GraphicEditor />
                <WordWindow />
                <SogouBar />
            </main>
            <Taskbar />
        </div>
    );
}
